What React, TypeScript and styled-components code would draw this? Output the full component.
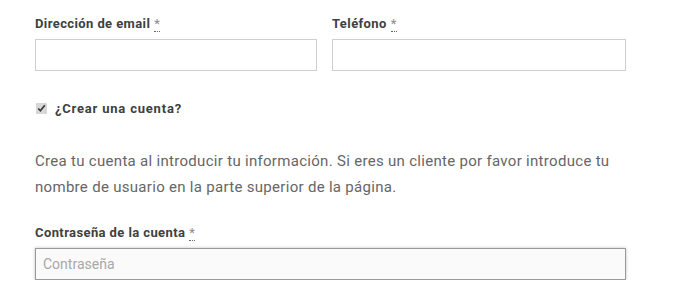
import React from 'react';
import styled, {createGlobalStyle} from 'styled-components';

const GlobalStyle = createGlobalStyle`
  body {
    margin: 0;
    background: #fff;
    font-family: Roboto, "Liberation Sans", sans-serif;
  }
`;

const Form = styled.form`
  width: 591px;
  padding: 15px 0 0 35px;
`;

const Row = styled.div`
  display: grid;
  grid-template-columns: 282px 294px;
  column-gap: 15px;
`;

const Field = styled.p`
  margin: 0;
  display: flex;
  flex-direction: column;
`;

const Label = styled.label`
  font-size: 13px;
  font-weight: 700;
  line-height: 18px;
  letter-spacing: 0.4px;
  color: #404040;
  margin-bottom: 6px;
`;

const Required = styled.abbr`
  color: #8a8a8a;
  text-decoration: none;
  border-bottom: 1px dotted #666;
  font-weight: 400;
  margin-left: 4px;
`;

const Input = styled.input<{ $focused?: boolean }>`
  box-sizing: border-box;
  width: 100%;
  height: 32px;
  border: 1px solid ${p => p.$focused ? '#9a9a9a' : '#cfcfcf'};
  background: ${p => p.$focused ? '#fafafa' : '#fff'};
  box-shadow: ${p => p.$focused ? '0 0 3px rgba(0,0,0,0.25)' : 'none'};
  font-family: Roboto, "Liberation Sans", sans-serif;
  font-size: 14px;
  padding: 0 7px;
  outline: none;
  color: #444;
  &::placeholder {
    color: #a8a8a8;
  }
`;

const CheckRow = styled.label`
  display: flex;
  align-items: center;
  gap: 8px;
  margin: 30px 0 0;
  font-size: 13px;
  font-weight: 700;
  letter-spacing: 0.8px;
  color: #404040;
  input {
    margin: 0 0 0 1px;
    width: 11px;
    height: 11px;
    accent-color: #d8d8d8;
  }
`;

const Note = styled.p`
  margin: 32px 0 24px;
  font-size: 15px;
  line-height: 26px;
  letter-spacing: 0.3px;
  color: #666;
`;

export default function App() {
    return (
        <>
            <GlobalStyle/>
            <Form>
                <Row>
                    <Field>
                        <Label>Dirección de email<Required title="obligatorio">*</Required></Label>
                        <Input type="email"/>
                    </Field>
                    <Field>
                        <Label>Teléfono<Required title="obligatorio">*</Required></Label>
                        <Input type="tel"/>
                    </Field>
                </Row>
                <CheckRow>
                    <input type="checkbox" defaultChecked/>
                    <span>¿Crear una cuenta?</span>
                </CheckRow>
                <Note>
                    Crea tu cuenta al introducir tu información. Si eres un cliente por favor introduce tu
                    nombre de usuario en la parte superior de la página.
                </Note>
                <Field>
                    <Label>Contraseña de la cuenta<Required title="obligatorio">*</Required></Label>
                    <Input type="password" placeholder="Contraseña" $focused/>
                </Field>
            </Form>
        </>
    );
}
